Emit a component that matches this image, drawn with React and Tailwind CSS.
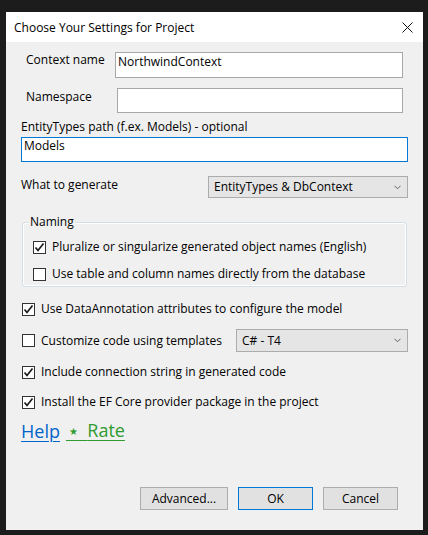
import React from "react";

function Check({ checked }) {
  return (
    <span className="w-[13px] h-[13px] shrink-0 bg-white border border-[#333333] flex items-center justify-center">
      {checked && (
        <svg width="11" height="11" viewBox="0 0 11 11">
          <path d="M1.5 5.5 L4 8.5 L9.5 1.5" fill="none" stroke="#1a1a1a" strokeWidth="1.7" />
        </svg>
      )}
    </span>
  );
}

function Chevron() {
  return (
    <svg width="7" height="5" viewBox="0 0 7 5" className="shrink-0">
      <path d="M0.5 0.8 L3.5 3.8 L6.5 0.8" fill="none" stroke="#606060" strokeWidth="1" />
    </svg>
  );
}

export default function App() {
  const font = { fontFamily: '"Open Sans", "Noto Sans", sans-serif' };
  return (
    <div className="w-[428px] h-[535px] bg-[#1c1c1c] pt-[12px] pl-[6px]" style={font}>
      <div className="w-[417px] h-[518px] bg-[#f0f0f0] flex flex-col text-[12px] text-black leading-[16px]">
        {/* Title bar */}
        <div className="h-[30px] bg-white flex items-center justify-between pl-[8px] pr-[10px] shrink-0">
          <span className="text-[12px] pt-[1px]">Choose Your Settings for Project</span>
          <svg width="11" height="11" viewBox="0 0 11 11">
            <path d="M0.5 0.5 L10.5 10.5 M10.5 0.5 L0.5 10.5" stroke="#111" strokeWidth="1" />
          </svg>
        </div>

        {/* Context name */}
        <div className="mt-[10px] flex h-[26px]">
          <span className="ml-[20px] w-[89px]">Context name</span>
          <div className="w-[288px] h-[26px] bg-white border border-[#a7a7a7] pl-[2px] pt-[1px]">NorthwindContext</div>
        </div>

        {/* Namespace */}
        <div className="mt-[10px] flex h-[25px]">
          <span className="ml-[20px] w-[91px] pt-[1px]">Namespace</span>
          <div className="w-[286px] h-[25px] bg-white border border-[#a7a7a7]"></div>
        </div>

        {/* EntityTypes path */}
        <div className="mt-[6px] ml-[15px]">EntityTypes path (f.ex. Models) - optional</div>
        <div className="mt-[2px] ml-[15px] w-[387px] h-[25px] bg-white border border-[#0078d7] pl-[2px]">Models</div>

        {/* What to generate */}
        <div className="mt-[14px] flex h-[22px] pl-[15px] pr-[15px]">
          <span className="pt-[1px]">What to generate</span>
          <div className="ml-auto w-[200px] h-[22px] bg-[#e5e5e5] border border-[#acacac] flex items-center pl-[5px] pr-[6px]">
            <span className="flex-1">EntityTypes &amp; DbContext</span>
            <Chevron />
          </div>
        </div>

        {/* Naming group */}
        <fieldset className="mt-[16px] ml-[16px] w-[385px] border border-[#d5dee5] rounded-[3px] px-[6px] pb-[4px] shadow-[inset_0_0_0_1px_#ffffff]">
          <legend className="px-[1px] bg-[#f0f0f0]">Naming</legend>
          <div className="pl-[4px]">
            <div className="mt-[9px] h-[16px] flex items-center">
              <Check checked />
              <span className="ml-[6px]">Pluralize or singularize generated object names (English)</span>
            </div>
            <div className="mt-[11px] h-[16px] flex items-center">
              <Check />
              <span className="ml-[6px]">Use table and column names directly from the database</span>
            </div>
          </div>
        </fieldset>

        <div className="pl-[16px] flex flex-col">
          <div className="mt-[14px] h-[16px] flex items-center">
            <Check checked />
            <span className="ml-[6px]">Use DataAnnotation attributes to configure the model</span>
          </div>
          <div className="mt-[12px] h-[23px] flex items-center pr-[15px]">
            <Check />
            <span className="ml-[6px]">Customize code using templates</span>
            <div className="ml-auto w-[172px] h-[23px] bg-[#e5e5e5] border border-[#acacac] flex items-center pl-[5px] pr-[6px]">
              <span className="flex-1">C# - T4</span>
              <Chevron />
            </div>
          </div>
          <div className="mt-[12px] h-[16px] flex items-center">
            <Check checked />
            <span className="ml-[6px]">Include connection string in generated code</span>
          </div>
          <div className="mt-[14px] h-[16px] flex items-center">
            <Check checked />
            <span className="ml-[6px]">Install the EF Core provider package in the project</span>
          </div>
          <div className="mt-[9px] h-[24px] flex items-center text-[18px] leading-[24px] -ml-[1px]">
            <span className="text-[#0066cc] underline underline-offset-[3px] decoration-[1px]">Help</span>
            <span className="ml-[6px] text-[#2f9a2f] underline underline-offset-[3px] decoration-[1px] whitespace-pre">
              {"\u2009"}
              <span className="text-[10px] align-middle" style={{ fontFamily: '"DejaVu Sans", sans-serif' }}>★</span>
              {"\u00a0\u00a0"}Rate
            </span>
          </div>
        </div>

        {/* Buttons */}
        <div className="mt-auto mb-[20px] flex justify-end pr-[25px] gap-[10px]">
          <button className="w-[88px] h-[23px] bg-[#e1e1e1] border border-[#adadad] leading-[20px]">Advanced...</button>
          <button className="w-[75px] h-[23px] bg-[#e1e1e1] border border-[#0078d7] leading-[20px]">OK</button>
          <button className="w-[75px] h-[23px] bg-[#e1e1e1] border border-[#adadad] leading-[20px]">Cancel</button>
        </div>
      </div>
    </div>
  );
}
